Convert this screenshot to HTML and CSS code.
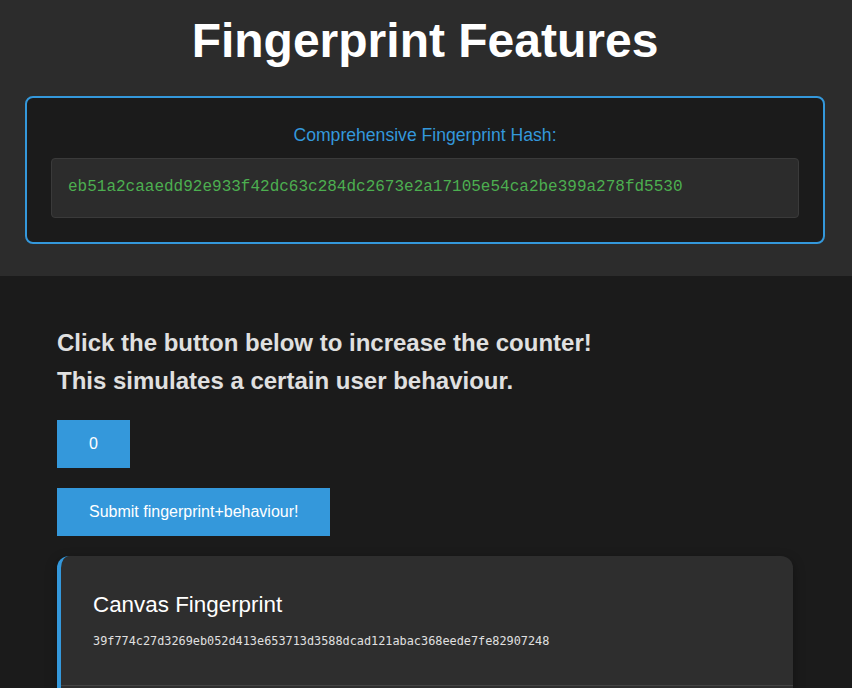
FILE: index.html
```html
<!DOCTYPE html>
<html lang="en">
<head>
<meta charset="utf-8">
<title>Fingerprint Features</title>
<link rel="stylesheet" href="styles.css">
</head>
<body>
<header class="top">
  <h1 class="title">Fingerprint Features</h1>
  <section class="hash-box">
    <div class="hash-label">Comprehensive Fingerprint Hash:</div>
    <div class="hash-value">eb51a2caaedd92e933f42dc63c284dc2673e2a17105e54ca2be399a278fd5530</div>
  </section>
</header>
<main class="main">
  <h2 class="intro">Click the button below to increase the counter!<br>This simulates a certain user behaviour.</h2>
  <div class="actions">
    <button class="btn" type="button">0</button>
    <button class="btn" type="button">Submit fingerprint+behaviour!</button>
  </div>
  <section class="card">
    <div class="feature">
      <h3 class="feature-title">Canvas Fingerprint</h3>
      <div class="feature-value">39f774c27d3269eb052d413e653713d3588dcad121abac368eede7fe82907248</div>
    </div>
  </section>
</main>
</body>
</html>
```

FILE: styles.css
```css
* { box-sizing: border-box; }
html, body {
  margin: 0;
  padding: 0;
  background: #1b1b1b;
  font-family: "Liberation Sans", Arial, sans-serif;
  color: #e0e0e0;
}
.top {
  background: #2c2c2c;
  padding: 13px 27px 32px 25px;
}
.title {
  margin: 0 0 28px;
  text-align: center;
  font-size: 48px;
  font-weight: bold;
  line-height: 55px;
  color: #ffffff;
}
.hash-box {
  background: #1b1b1b;
  border: 2px solid #3498db;
  border-radius: 8px;
  padding: 24px;
}
.hash-label {
  text-align: center;
  color: #3498db;
  font-size: 17.6px;
  line-height: 26px;
  margin-bottom: 10px;
}
.hash-value {
  background: #2c2c2c;
  border: 1px solid #3a3a3a;
  border-radius: 4px;
  padding: 17px 16px 19px;
  font-family: "Liberation Mono", "Courier New", monospace;
  font-size: 16px;
  line-height: 22px;
  color: #4caf50;
}
.main {
  padding: 48px 59px 40px 57px;
}
.intro {
  margin: 0 0 20px;
  font-size: 24px;
  font-weight: bold;
  line-height: 38px;
  color: #e0e0e0;
}
.actions {
  display: flex;
  flex-direction: column;
  align-items: flex-start;
  gap: 20px;
  margin-bottom: 20px;
}
.btn {
  background: #3498db;
  color: #ffffff;
  border: none;
  border-radius: 0;
  padding: 15px 32px;
  font-family: "Liberation Sans", Arial, sans-serif;
  font-size: 16px;
  line-height: 18px;
  cursor: pointer;
}
.card {
  background: #2e2e2e;
  border-left: 4px solid #3498db;
  border-radius: 12px;
  box-shadow: 0 4px 12px rgba(0, 0, 0, 0.35);
  overflow: hidden;
  padding-bottom: 40px;
}
.feature {
  padding: 36px 32px 37px;
  border-bottom: 1px solid #444444;
}
.feature-title {
  margin: 0 0 16px;
  font-size: 22.4px;
  font-weight: normal;
  line-height: 26px;
  color: #ffffff;
}
.feature-value {
  font-family: "DejaVu Sans Mono", monospace;
  font-size: 11.85px;
  line-height: 14px;
  color: #e0e0e0;
}
```
